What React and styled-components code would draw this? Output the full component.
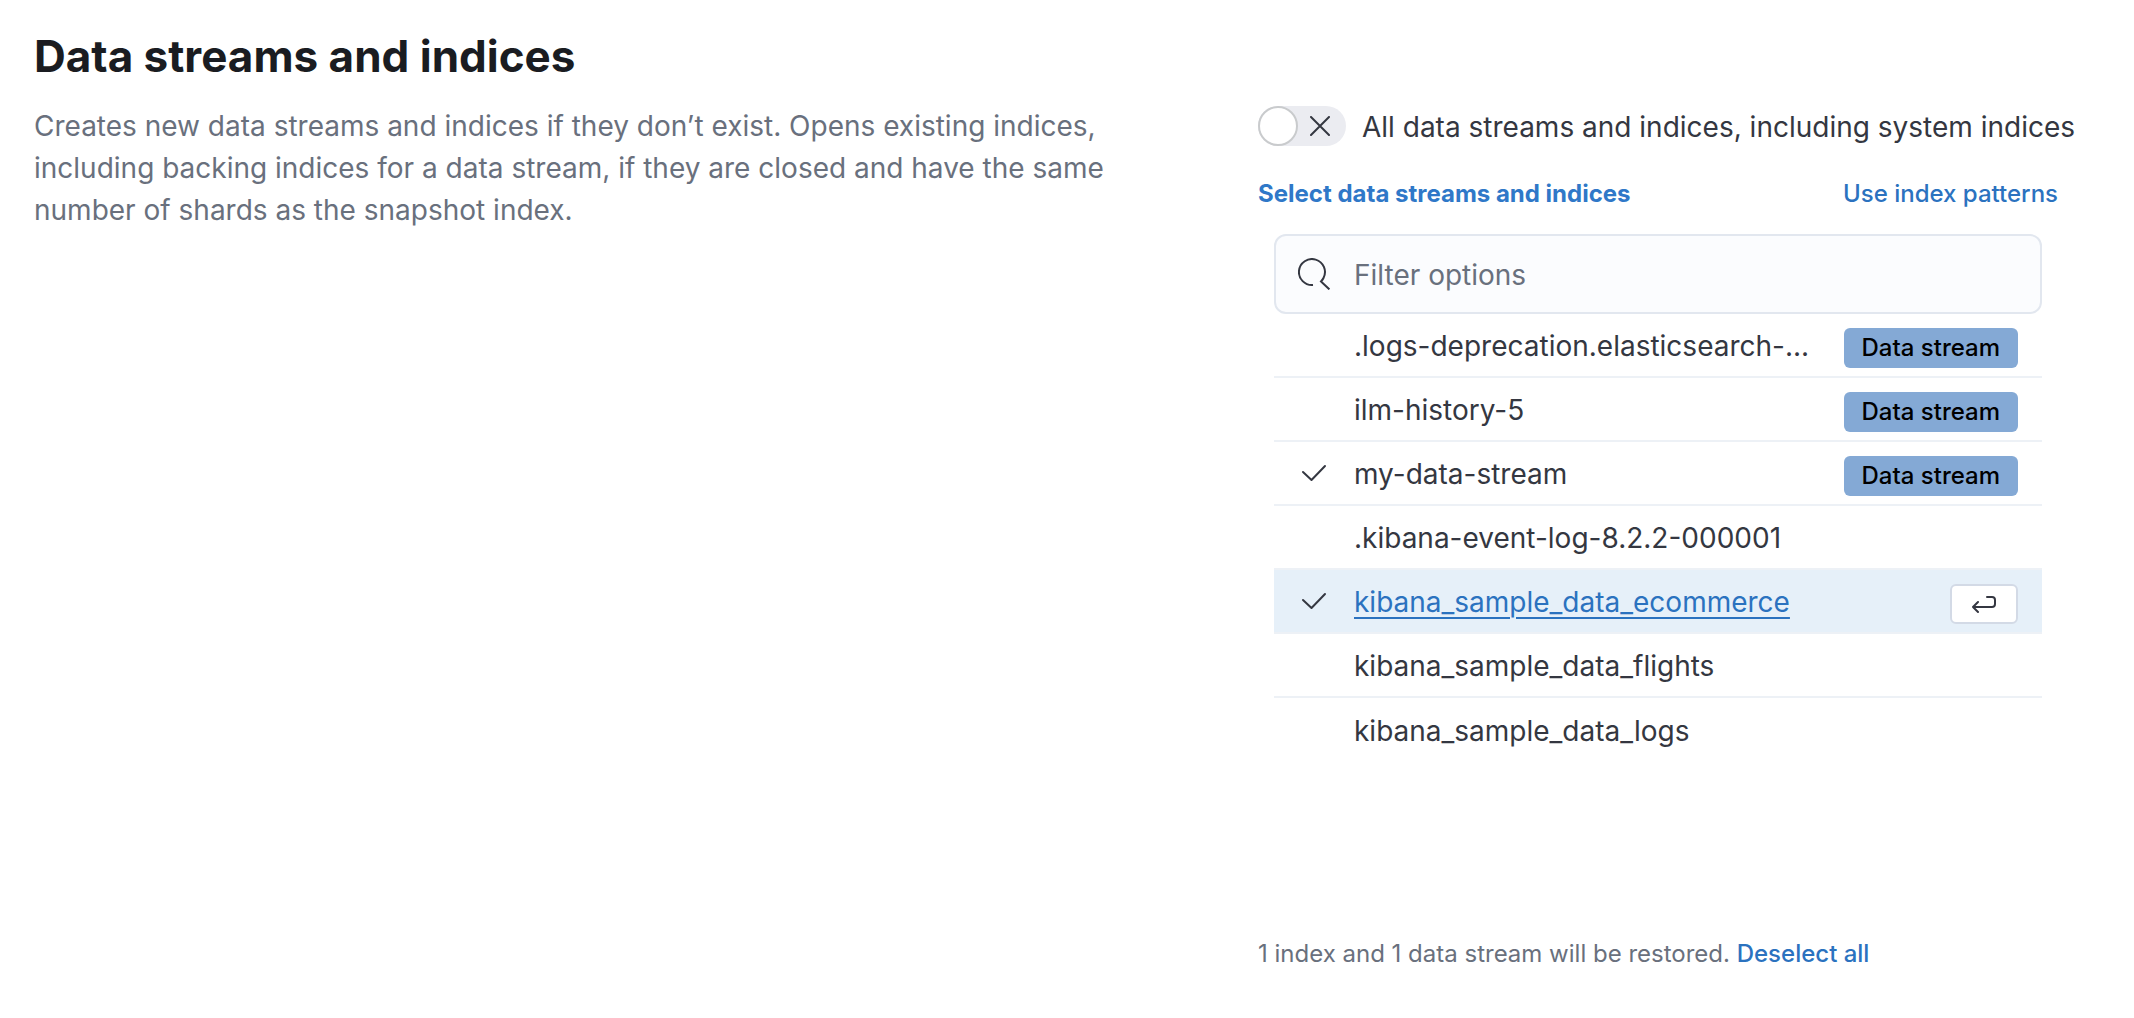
import React, { useState } from "react";
import styled, { createGlobalStyle } from "styled-components";

const GlobalStyle = createGlobalStyle`
  *, *::before, *::after { box-sizing: border-box; }
  body {
    margin: 0;
    background: #ffffff;
    color: #343741;
    font-family: Inter, "Liberation Sans", sans-serif;
    font-size: 28px;
    line-height: 42px;
  }
`;

const Page = styled.main`
  display: grid;
  grid-template-columns: minmax(0, 141fr) minmax(0, 100fr);
  column-gap: 96px;
  padding: 28px 76px 40px 34px;
`;

const Title = styled.h2`
  margin: 0;
  color: #1a1c21;
  font-size: 44px;
  line-height: 56px;
  font-weight: 700;
`;

const Description = styled.p`
  margin: 21px 0 0;
  color: #69707d;
`;

const Field = styled.div`
  display: flex;
  flex-direction: column;
  padding-top: 78px;
`;

const SwitchLabel = styled.label`
  display: flex;
  align-items: flex-start;
  gap: 16px;
  white-space: nowrap;
  cursor: pointer;
`;

const HiddenInput = styled.input`
  position: absolute;
  opacity: 0;
  width: 1px;
  height: 1px;
  margin: 0;
`;

const Track = styled.span`
  display: flex;
  align-items: center;
  justify-content: space-between;
  flex: none;
  flex-direction: ${(p) => (p.$on ? "row-reverse" : "row")};
  width: 88px;
  height: 40px;
  border-radius: 20px;
  background: ${(p) => (p.$on ? "#2b72bf" : "#ebecf1")};
  color: ${(p) => (p.$on ? "#ffffff" : "#343741")};

  svg { margin: 0 16px 0 12px; }
`;

const Thumb = styled.span`
  flex: none;
  width: 40px;
  height: 40px;
  border: 2px solid #c9cbcd;
  border-radius: 50%;
  background: #ffffff;
`;

const LabelRow = styled.div`
  display: flex;
  justify-content: space-between;
  align-items: baseline;
  margin-top: 28px;
  font-size: 24px;
  line-height: 36px;
`;

const FieldLabel = styled.label`
  color: #2f78c8;
  font-weight: 700;
`;

const Link = styled.a`
  color: #2b72bf;
  font-weight: 500;
  text-decoration: none;
`;

const Selectable = styled.div`
  display: flex;
  flex-direction: column;
  min-height: 724px;
  padding: 22px 16px 0;
`;

const SearchBox = styled.div`
  display: flex;
  align-items: center;
  gap: 24px;
  height: 80px;
  padding: 0 22px;
  border: 2px solid #e2e7ef;
  border-radius: 12px;
  background: #fbfcfe;
`;

const SearchInput = styled.input`
  flex: 1;
  min-width: 0;
  padding: 2px 0 0;
  border: 0;
  outline: 0;
  background: transparent;
  color: #343741;
  font: inherit;

  &::placeholder { color: #69707d; opacity: 1; }
`;

const List = styled.ul`
  margin: 0;
  padding: 0;
  list-style: none;
`;

const Item = styled.li`
  height: 64px;
  border-bottom: 2px solid #edf1f6;
  background: ${(p) => (p.$active ? "#e6f0f9" : "transparent")};

  &:last-child { border-bottom: 0; }
`;

const Option = styled.label`
  display: flex;
  align-items: center;
  gap: 24px;
  height: 100%;
  padding: 0 24px;
  cursor: pointer;
`;

const Mark = styled.span`
  display: flex;
  flex: none;
  width: 32px;
  height: 32px;
`;

const Name = styled.span`
  flex: 1;
  min-width: 0;
  padding-top: 2px;
  overflow: hidden;
  text-overflow: ellipsis;
  white-space: nowrap;
  color: ${(p) => (p.$active ? "#2b72bf" : "inherit")};
  text-decoration: ${(p) => (p.$active ? "underline" : "none")};
  text-decoration-thickness: 2px;
  text-underline-offset: 5px;
`;

const Append = styled.span`
  display: flex;
  padding-top: 6px;
`;

const Badge = styled.span`
  padding: 2px 18px;
  border-radius: 6px;
  background: #84a9d5;
  color: #000000;
  font-size: 24px;
  line-height: 36px;
  font-weight: 500;
`;

const KeyBadge = styled.span`
  display: flex;
  align-items: center;
  justify-content: center;
  width: 68px;
  height: 40px;
  border: 2px solid #d3dae6;
  border-radius: 6px;
  background: #ffffff;
`;

const Summary = styled.p`
  margin: 0;
  color: #69707d;
  font-size: 24px;
  line-height: 36px;
`;

const Stroke = ({ size, children, width = 2, ...rest }) => (
  <svg
    width={size}
    height={size}
    viewBox={`0 0 ${size} ${size}`}
    fill="none"
    stroke="currentColor"
    strokeWidth={width}
    strokeLinecap="round"
    strokeLinejoin="round"
    aria-hidden="true"
    {...rest}
  >
    {children}
  </svg>
);

const CrossIcon = () => (
  <Stroke size={20}>
    <path d="M1 1l18 18M19 1L1 19" />
  </Stroke>
);

const SearchIcon = () => (
  <Stroke size={32} strokeLinecap="butt" strokeLinejoin="miter">
    <path d="M15 27A13 13 0 1 1 25.500 20Q24.600 21.800 23 23.400L31.400 31.400" />
  </Stroke>
);

const CheckIcon = () => (
  <Stroke size={32}>
    <path d="M5 15l8.500 8L27 9" />
  </Stroke>
);

const ReturnIcon = () => (
  <Stroke size={24}>
    <path d="M15 5h5a3 3 0 0 1 3 3v4a3 3 0 0 1-3 3H1M6 10l-5 5l5 5" />
  </Stroke>
);

const OPTIONS = [
  { name: ".logs-deprecation.elasticsearch-...", stream: true },
  { name: "ilm-history-5", stream: true },
  { name: "my-data-stream", stream: true },
  { name: ".kibana-event-log-8.2.2-000001" },
  { name: "kibana_sample_data_ecommerce" },
  { name: "kibana_sample_data_flights" },
  { name: "kibana_sample_data_logs" },
];

const ACTIVE = "kibana_sample_data_ecommerce";

export default function App() {
  const [all, setAll] = useState(false);
  const [picked, setPicked] = useState(["my-data-stream", ACTIVE]);

  const toggle = (name) =>
    setPicked((now) =>
      now.includes(name) ? now.filter((n) => n !== name) : [...now, name]
    );

  return (
    <>
      <GlobalStyle />
      <Page>
        <section>
          <Title>Data streams and indices</Title>
          <Description>
            Creates new data streams and indices if they don’t exist. Opens
            existing indices, including backing indices for a data stream, if
            they are closed and have the same number of shards as the snapshot
            index.
          </Description>
        </section>
        <Field>
          <SwitchLabel>
            <HiddenInput
              type="checkbox"
              role="switch"
              checked={all}
              onChange={() => setAll(!all)}
            />
            <Track $on={all}>
              <Thumb />
              <CrossIcon />
            </Track>
            All data streams and indices, including system indices
          </SwitchLabel>
          <LabelRow>
            <FieldLabel htmlFor="filter">Select data streams and indices</FieldLabel>
            <Link href="#patterns">Use index patterns</Link>
          </LabelRow>
          <Selectable>
            <SearchBox>
              <SearchIcon />
              <SearchInput id="filter" type="text" placeholder="Filter options" />
            </SearchBox>
            <List>
              {OPTIONS.map(({ name, stream }) => {
                const active = name === ACTIVE;
                return (
                  <Item key={name} $active={active}>
                    <Option>
                      <HiddenInput
                        type="checkbox"
                        checked={picked.includes(name)}
                        onChange={() => toggle(name)}
                      />
                      <Mark>{picked.includes(name) && <CheckIcon />}</Mark>
                      <Name $active={active}>{name}</Name>
                      {stream && (
                        <Append>
                          <Badge>Data stream</Badge>
                        </Append>
                      )}
                      {active && (
                        <Append>
                          <KeyBadge>
                            <ReturnIcon />
                          </KeyBadge>
                        </Append>
                      )}
                    </Option>
                  </Item>
                );
              })}
            </List>
          </Selectable>
          <Summary>
            1 index and 1 data stream will be restored.{" "}
            <Link href="#deselect">Deselect all</Link>
          </Summary>
        </Field>
      </Page>
    </>
  );
}
